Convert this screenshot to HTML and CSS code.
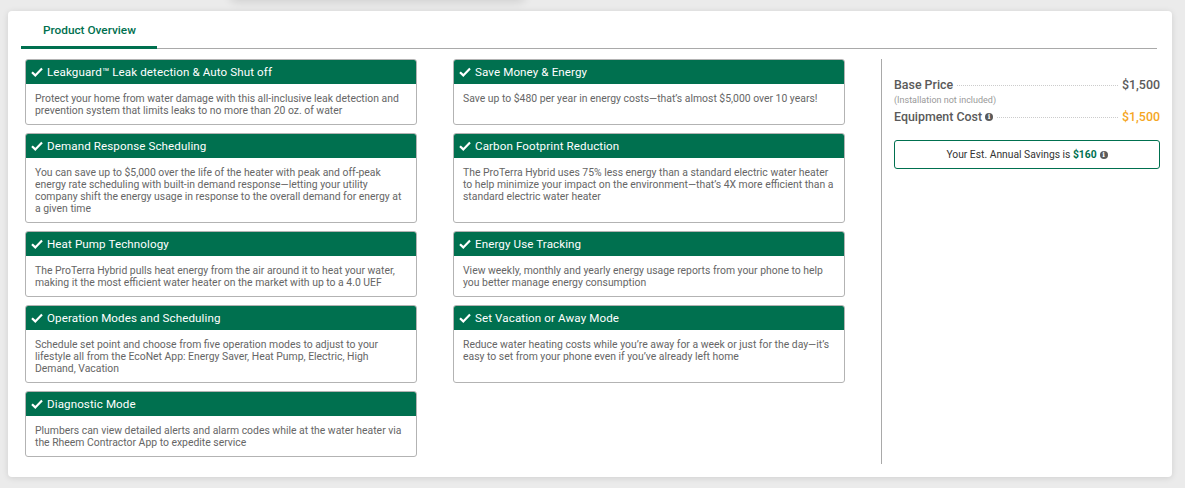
FILE: index.html
```html
<!DOCTYPE html>
<html>
<head>
<meta charset="utf-8">
<link rel="stylesheet" href="styles.css">
</head>
<body>
<div class="top-shadow"></div>
<div class="panel">
  <div class="tabs">
    <div class="tab active">Product Overview</div>
  </div>
  <div class="content">
    <div class="features">
      <div class="feature">
        <div class="f-head"><svg class="chk" viewBox="0 0 12 10"><path d="M1 5.2 L4.3 8.4 L11 1.6" /></svg>Leakguard™ Leak detection &amp; Auto Shut off</div>
        <div class="f-body">Protect your home from water damage with this all-inclusive leak detection and prevention system that limits leaks to no more than 20 oz. of water</div>
      </div>
      <div class="feature">
        <div class="f-head"><svg class="chk" viewBox="0 0 12 10"><path d="M1 5.2 L4.3 8.4 L11 1.6" /></svg>Save Money &amp; Energy</div>
        <div class="f-body">Save up to $480 per year in energy costs—that’s almost $5,000 over 10 years!</div>
      </div>
      <div class="feature">
        <div class="f-head"><svg class="chk" viewBox="0 0 12 10"><path d="M1 5.2 L4.3 8.4 L11 1.6" /></svg>Demand Response Scheduling</div>
        <div class="f-body">You can save up to $5,000 over the life of the heater with peak and off-peak energy rate scheduling with built-in demand response—letting your utility company shift the energy usage in response to the overall demand for energy at a given time</div>
      </div>
      <div class="feature">
        <div class="f-head"><svg class="chk" viewBox="0 0 12 10"><path d="M1 5.2 L4.3 8.4 L11 1.6" /></svg>Carbon Footprint Reduction</div>
        <div class="f-body">The ProTerra Hybrid uses 75% less energy than a standard electric water heater to help minimize your impact on the environment—that’s 4X more efficient than a standard electric water heater</div>
      </div>
      <div class="feature">
        <div class="f-head"><svg class="chk" viewBox="0 0 12 10"><path d="M1 5.2 L4.3 8.4 L11 1.6" /></svg>Heat Pump Technology</div>
        <div class="f-body">The ProTerra Hybrid pulls heat energy from the air around it to heat your water, making it the most efficient water heater on the market with up to a 4.0 UEF</div>
      </div>
      <div class="feature">
        <div class="f-head"><svg class="chk" viewBox="0 0 12 10"><path d="M1 5.2 L4.3 8.4 L11 1.6" /></svg>Energy Use Tracking</div>
        <div class="f-body">View weekly, monthly and yearly energy usage reports from your phone to help you better manage energy consumption</div>
      </div>
      <div class="feature">
        <div class="f-head"><svg class="chk" viewBox="0 0 12 10"><path d="M1 5.2 L4.3 8.4 L11 1.6" /></svg>Operation Modes and Scheduling</div>
        <div class="f-body">Schedule set point and choose from five operation modes to adjust to your lifestyle all from the EcoNet App: Energy Saver, Heat Pump, Electric, High Demand, Vacation</div>
      </div>
      <div class="feature">
        <div class="f-head"><svg class="chk" viewBox="0 0 12 10"><path d="M1 5.2 L4.3 8.4 L11 1.6" /></svg>Set Vacation or Away Mode</div>
        <div class="f-body">Reduce water heating costs while you’re away for a week or just for the day—it’s easy to set from your phone even if you’ve already left home</div>
      </div>
      <div class="feature">
        <div class="f-head"><svg class="chk" viewBox="0 0 12 10"><path d="M1 5.2 L4.3 8.4 L11 1.6" /></svg>Diagnostic Mode</div>
        <div class="f-body">Plumbers can view detailed alerts and alarm codes while at the water heater via the Rheem Contractor App to expedite service</div>
      </div>
    </div>
    <div class="divider"></div>
    <div class="pricing">
      <div class="price-row">
        <span class="label">Base Price</span>
        <span class="dots"></span>
        <span class="value">$1,500</span>
      </div>
      <div class="note">(Installation not included)</div>
      <div class="price-row">
        <span class="label">Equipment Cost <span class="info">i</span></span>
        <span class="dots"></span>
        <span class="value orange">$1,500</span>
      </div>
      <div class="savings">Your Est. Annual Savings is <strong>$160</strong> <span class="info">i</span></div>
    </div>
  </div>
</div>
</body>
</html>
```

FILE: styles.css
```css
* { box-sizing: border-box; }
html, body { margin: 0; padding: 0; }
body {
  background: #ebebeb;
  font-family: Roboto, "Liberation Sans", sans-serif;
  color: #555;
  width: 1185px;
  height: 488px;
  padding: 11px 13px 0 8px;
  position: relative;
  overflow: hidden;
}
.top-shadow {
  position: absolute;
  left: 230px;
  top: -20px;
  width: 295px;
  height: 20px;
  box-shadow: 0 2px 10px rgba(0,0,0,0.12);
  border-radius: 6px;
}
.panel {
  background: #fff;
  border-radius: 4px;
  box-shadow: 0 1px 6px rgba(0,0,0,0.12);
  height: 466px;
  padding: 0 12px 12px 13px;
}
.tabs {
  display: flex;
  border-bottom: 1px solid #a9a9a9;
  height: 38px;
  margin: 0 3px 10px 0;
}
.tab {
  width: 136px;
  padding-top: 12px;
  padding-left: 22px;
  font-size: 11.8px;
  font-weight: 500;
  color: #00704f;
  border-bottom: 3px solid #00704f;
  margin-bottom: -1px;
}
.content {
  display: flex;
  padding-left: 4px;
  height: 406px;
}
.features {
  width: 820px;
  display: grid;
  grid-template-columns: 392px 392px;
  column-gap: 36px;
  row-gap: 8px;
  align-content: start;
}
.feature {
  border: 1px solid #b3b3b3;
  border-radius: 3px;
  overflow: hidden;
  display: flex;
  flex-direction: column;
}
.f-head {
  background: #00704f;
  color: #fff;
  height: 24px;
  display: flex;
  align-items: center;
  padding-left: 5px;
  font-size: 11.6px;
  font-weight: 400;
  letter-spacing: 0.1px;
}
.chk {
  width: 12px;
  height: 10px;
  margin-right: 4px;
  fill: none;
  stroke: #fff;
  stroke-width: 2.2;
}
.f-body {
  flex: 1;
  padding: 8.5px 9px 7.5px 9px;
  font-size: 10.4px;
  line-height: 12px;
  color: #666;
}
.divider {
  width: 1px;
  background: #a9a9a9;
  margin-left: 36px;
  height: 405px;
}
.pricing {
  flex: 1;
  padding: 18px 0 0 12px;
}
.price-row {
  display: flex;
  align-items: baseline;
  font-size: 12.4px;
  font-weight: 500;
  color: #5a5a5a;
  height: 14px;
}
.label { display: flex; align-items: center; }
.dots {
  flex: 1;
  border-bottom: 1px dotted #ccc;
  margin: 0 4px;
  position: relative;
  top: -3px;
}
.value { color: #5a5a5a; }
.orange { color: #f5a623; }
.note {
  font-size: 9px;
  color: #999;
  margin: 4px 0 4px 0;
}
.info {
  display: inline-flex;
  align-items: center;
  justify-content: center;
  width: 8px;
  height: 8px;
  border-radius: 50%;
  background: #5a5a5a;
  color: #fff;
  font-size: 7px;
  font-weight: 700;
  margin-left: 3px;
  font-family: "DejaVu Serif", serif;
}
.savings {
  margin-top: 17px;
  border: 1px solid #00704f;
  border-radius: 3px;
  height: 29px;
  display: flex;
  align-items: center;
  justify-content: center;
  font-size: 10.3px;
  color: #333;
  white-space: pre;
}
.savings strong { color: #00704f; font-weight: 700; }
```
